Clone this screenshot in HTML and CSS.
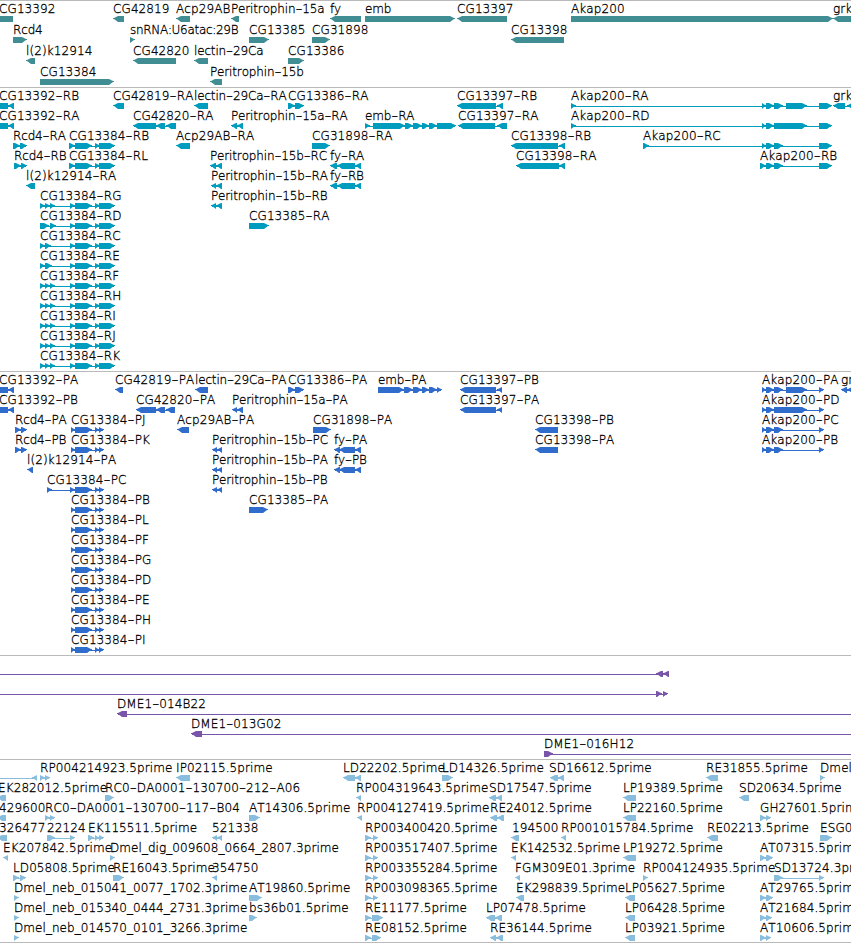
FILE: index.html
```html
<!DOCTYPE html>
<html lang="en">
<head>
<meta charset="utf-8">
<title>Genome browser</title>
<link rel="stylesheet" href="styles.css">
</head>
<body>
<main id="browser" class="browser"></main>
<script src="tracks.js"></script>
</body>
</html>
```
FILE: styles.css
```css
body {
  margin: 0;
  background: #fff;
  overflow: hidden;
}

.browser {
  display: flex;
  flex-direction: column;
  width: 851px;
  height: 943px;
  overflow: hidden;
}

.track {
  display: flex;
  flex-direction: column;
  flex: none;
  box-sizing: border-box;
  border-top: 1px solid #bababa;
  padding-bottom: 3px;
}

.row {
  display: block;
  flex: none;
  width: 851px;
  height: 20px;
  overflow: visible;
}

.genes { padding-bottom: 2px; }
.genes .row { height: 21px; }

.ests {
  padding-bottom: 2px;
  border-bottom: 1px solid #bababa;
}

.genes { color: #408e93; }
.transcripts { color: #009cbd; }
.proteins { color: #306ccb; }
.clones { color: #7855a9; }
.ests { color: #88bddd; }

.glyph { fill: currentColor; }

.label {
  fill: #000;
  stroke: #000;
  stroke-width: 0.3px;
  font-family: "DejaVu Sans Light", "DejaVu Sans", sans-serif;
  font-size: 12px;
  font-weight: 200;
  font-kerning: none;
  letter-spacing: 0.1px;
  white-space: pre;
}

.label.tight { letter-spacing: -0.15px; }
.label.tighter { letter-spacing: -0.3px; }
.label.even { letter-spacing: 0.06px; }

.hyphen { font-size: 19.5px; }
```
FILE: tracks.js
```javascript
// Feature notation: "label|label x|direction|start,end,start,end,..."
const reps = (n, make) => [...n].map(make);
const tail = "70,75,75,92,95,100,99,115";
const ptail = "71,75,75,92,95,99,99,104";
const akR = "762,766,766,774,774,783";

const tracks = {
  genes: [
    ["CG13392|-1|<|-5,13", "CG42819|113|<|113,124", "Acp29AB|176|<|176,190", "Peritrophin-15a|231|<|231,239", "fy|330|<|330,361", "emb|365|>|365,455", "CG13397|457|<|457,507", "Akap200|571|>|571,833", "grk|833|<|833,860"],
    ["Rcd4|13|>|13,27", "snRNA:U6atac:29B|130|>|130,135", "CG13385|249|>|249,269", "CG31898|312|>|312,330", "CG13398|511|<|511,564"],
    ["l(2)k12914|26|<|26,35", "CG42820|133|<|133,176", "lectin-29Ca|194|<|194,208", "CG13386|288|>|288,304"],
    ["CG13384|40|>|40,114", "Peritrophin-15b|210|<|210,222"]
  ],
  transcripts: [
    ["CG13392-RB|-1|<|-5,8,8,14", "CG42819-RA|113|<|113,124", "lectin-29Ca-RA|194|<|194,208", "CG13386-RA|288|>|288,295,295,304", "CG13397-RB|457|<|457,496,497,503", "Akap200-RA|571|>|571,576," + akR + ",786,807,819,832", "grk|833|<|833,845,847,856"],
    ["CG13392-RA|-1|<|-5,8,8,14", "CG42820-RA|133|<|133,156,156,165,166,176", "Peritrophin-15a-RA|231|<|231,237,237,243", "emb-RA|365|>|365,370,373,405,405,413,413,422,422,429,429,437,437,456", "CG13397-RA|458|<|458,495,497,507", "Akap200-RD|571|>|571,576,762,766,766,774,774,807,819,832"],
    ["Rcd4-RA|13|>|13,20,20,27", "CG13384-RB|69|>|69,75,75,92,95,100,99,115", "Acp29AB-RA|176|<|176,190", "CG31898-RA|312|>|312,330", "CG13398-RB|511|<|511,558,559,565", "Akap200-RC|643|>|643,649," + akR + ",819,832"],
    ["Rcd4-RB|14|>|14,21,21,27", "CG13384-RL|69|>|69,75,75,92,95,100,99,115", "Peritrophin-15b-RC|210|<|210,216,216,222", "fy-RA|330|<|330,337,337,355,355,361", "CG13398-RA|516|<|516,559,559,565", "Akap200-RB|760|>|760,766,766,774,774,783,819,832"],
    ["l(2)k12914-RA|26|<|26,35", "Peritrophin-15b-RA|211|<|211,216,216,222", "fy-RB|330|<|330,337,337,355,355,361"],
    ["CG13384-RG|40|>|40,45,45,50,50,55," + tail, "Peritrophin-15b-RB|211|<|211,216,216,222"],
    ["CG13384-RD|40|>|40,49,50,56," + tail, "CG13385-RA|249|>|249,269"],
    ["CG13384-RC|40|>|40,45,45,51," + tail],
    ["CG13384-RE|40|>|40,45,45,52," + tail],
    ...reps("FHIJK", c => ["CG13384-R" + c + "|40|>|40,45,45,50,50,55," + tail])
  ],
  proteins: [
    ["CG13392-PA|-1|<|-5,8,8,14", "CG42819-PA|115|<|115,123", "lectin-29Ca-PA|195|<|195,208", "CG13386-PA|288|>|288,295,295,304", "emb-PA|378|>|378,404,404,413,413,422,422,429,429,437,437,442", "CG13397-PB|460|<|460,496,497,502", "Akap200-PA|762|>|" + akR + ",786,807,819,824", "grk|841|<|841,847,847,856"],
    ["CG13392-PB|-1|<|-5,8,8,14", "CG42820-PA|136|<|136,156,156,165,166,175", "Peritrophin-15a-PA|232|<|232,237,237,243", "CG13397-PA|460|<|460,496,497,502", "Akap200-PD|762|>|762,766,766,774,774,807,819,824"],
    ["Rcd4-PA|15|>|15,21,21,27", "CG13384-PJ|71|>|" + ptail, "Acp29AB-PA|177|<|177,189", "CG31898-PA|313|>|313,331", "CG13398-PB|535|<|535,558", "Akap200-PC|762|>|" + akR + ",819,824"],
    ["Rcd4-PB|15|>|15,21,21,27", "CG13384-PK|71|>|" + ptail, "Peritrophin-15b-PC|212|<|212,217,217,222", "fy-PA|334|<|334,340,339,355,355,361", "CG13398-PA|535|<|535,558", "Akap200-PB|762|>|" + akR + ",819,824"],
    ["l(2)k12914-PA|27|<|27,33", "Peritrophin-15b-PA|212|<|212,217,217,222", "fy-PB|334|<|334,340,339,355,355,361"],
    ["CG13384-PC|47|>|47,52,70,75,75,92,95,99,99,104", "Peritrophin-15b-PB|212|<|212,217,217,222"],
    ["CG13384-PB|71|>|" + ptail, "CG13385-PA|249|>|249,268"],
    ...reps("LFGDEHI", c => ["CG13384-P" + c + "|71|>|" + ptail])
  ],
  clones: [
    ["|0|<|-9,-4,656,663,663,669"],
    ["|0|>|-9,-4,656,662,663,668"],
    ["DME1-014B22|117|<|117,127,860,870"],
    ["DME1-013G02|191|<|191,202,860,870"],
    ["DME1-016H12|544|>|544,553,860,870"]
  ],
  ests: [
    ["|0|<|-9,-4,32,37", "RP004214923.5prime|40|>|40,45,45,50", "IP02115.5prime|176|<|176,190", "LD22202.5prime|343|<|343,355,355,361", "LD14326.5prime|442|>|442,453", "SD16612.5prime|549|<|550,558,558,564", "RE31855.5prime|706|<|706,718", "Dmel|820|>|820,825"],
    ["EK282012.5prime|-2|<|-3,6", "RC0-DA0001-130700-212-A06|105|>|105,114", "RP004319643.5prime|356|<|356,361", "SD17547.5prime|489|<|489,496,496,502", "LP19389.5prime|623|<|623,636", "SD20634.5prime|739|<|739,749"],
    ["429600|-1|<|-3,6", "RC0-DA0001-130700-117-B04|45|>|45,50,50,55", "AT14306.5prime|249|>|249,260", "RP004127419.5prime|357|<|357,362", "RE24012.5prime|490|<|490,497,497,504", "LP22160.5prime|623|<|623,636", "GH27601.5prime|760|>|760,766,766,771"],
    ["326477|-1|<|-3,7", "22124|47|>|47,55,70,75", "EK115511.5prime|88|>|88,94,95,99,99,104", "521338|212|<|212,217,217,222", "RP003400420.5prime|365|>|365,371,373,378", "194500|512|<|511,519", "RP001015784.5prime|561|<|561,566", "RE02213.5prime|707|<|707,718", "ESG0|820|>|820,832"],
    ["EK207842.5prime|3|<|3,8", "Dmel_dig_009608_0664_2807.3prime|110|>|110,115", "RP003517407.5prime|365|>|365,371,373,378", "EK142532.5prime|511|<|511,516", "LP19272.5prime|623|<|623,636", "AT07315.5prime|760|>|760,766,766,773"],
    ["LD05808.5prime|13|>|13,19,20,26", "RE16043.5prime|113|>|113,124", "354750|212|<|212,217", "RP003355284.5prime|365|>|365,371,373,378", "FGM309E01.3prime|515|<|515,520", "RP004124935.5prime|643|>|643,648", "SD13724.3prime|774|>|774,783,819,824"],
    ["Dmel_neb_015041_0077_1702.3prime|14|>|14,19", "AT19860.5prime|249|>|249,262", "RP003098365.5prime|365|>|365,371,373,378", "EK298839.5prime|516|<|516,524", "LP05627.5prime|625|<|625,635", "AT29765.5prime|760|>|760,766,766,773"],
    ["Dmel_neb_015340_0444_2731.3prime|14|>|14,19", "bs36b01.5prime|249|>|249,257", "RE11177.5prime|365|>|365,371,372,383", "LP07478.5prime|486|<|486,495,495,502", "LP06428.5prime|625|<|625,635", "AT21684.5prime|760|>|760,766,766,772"],
    ["Dmel_neb_014570_0101_3266.3prime|14|>|14,19", "RE08152.5prime|365|>|365,371,372,381", "RE36144.5prime|490|<|490,496,496,503", "LP03921.5prime|625|<|625,635", "AT10606.5prime|760|>|760,766,766,771"]
  ]
};

const TOP = 15;

// One exon: a block whose last pixels taper in the strand's direction.
function exon(a, b, dir) {
  const head = Math.min(5, b - a);
  const [tail, tip, s] = dir === ">" ? [a, b, 1] : [b, a, -1];
  const neck = tip - s * head;
  return `M${tail} ${TOP}H${neck}L${tip - s} ${TOP + 2}H${tip}V${TOP + 3}H${tip - s}L${neck} ${TOP + 6}H${tail}Z`;
}

function spacing(text) {
  if (/^snRNA/.test(text)) return " tighter";
  if (/^(Peri|lectin|Rcd4|fy|emb)/.test(text)) return " tight";
  if (/^Dmel_/.test(text)) return " even";
  return "";
}

function labelMarkup(text) {
  return text.split("-").map((part, i) =>
    i ? `<tspan class="hyphen" dy="2">-</tspan><tspan dy="-2">${part}</tspan>` : part
  ).join("");
}

function feature(def) {
  const [text, x, dir, spans] = def.split("|");
  const n = spans.split(",").map(Number);
  let d = n.length > 2 ? `M${n[0] + 1} ${TOP + 3}H${n[n.length - 1] - 1}v1H${n[0] + 1}Z` : "";
  let paths = d ? `<path class="glyph" d="${d}"/>` : "";
  for (let i = 0; i < n.length; i += 2) {
    paths += `<path class="glyph" d="${exon(n[i], n[i + 1], dir)}"/>`;
  }
  return paths + (text ? `<text class="label${spacing(text)}" x="${x}" y="12">${labelMarkup(text)}</text>` : "");
}

document.getElementById("browser").innerHTML = Object.entries(tracks).map(([name, rows]) =>
  `<section class="track ${name}">` +
  rows.map(row => `<svg class="row">${row.map(feature).join("")}</svg>`).join("") +
  `</section>`
).join("");
```
